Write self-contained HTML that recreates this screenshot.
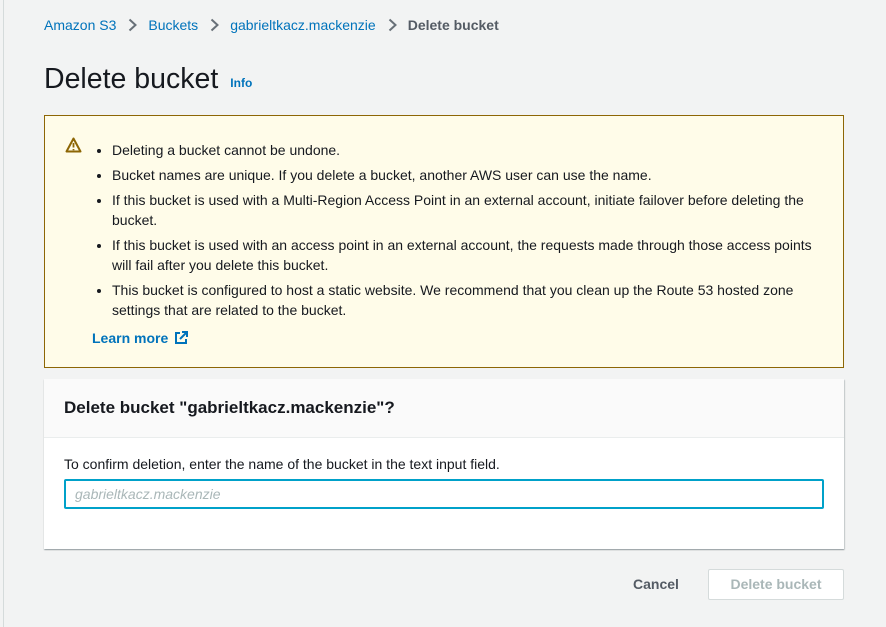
<!DOCTYPE html>
<html><head><style>
body{margin:0;width:886px;height:627px;background:#f2f3f3;font-family:"Liberation Sans",sans-serif;position:relative;overflow:hidden;color:#16191f}
.lb{position:absolute;left:3px;top:0;width:1px;height:627px;background:#d5dbdb}
.bc{position:absolute;left:44px;top:17px;font-size:14px;color:#0073bb;white-space:nowrap}
.bc svg{margin:0 11px 0 12px;vertical-align:-2px}
.bc b{color:#545b64}
h1{position:absolute;left:44px;top:63px;margin:0;font-size:28.5px;font-weight:normal;color:#16191f}
h1 small{font-size:12px;font-weight:bold;color:#0073bb;margin-left:12px;vertical-align:1px}
.warn{position:absolute;left:44px;top:115px;width:798px;height:251px;background:#fffce9;border:1px solid #8d6605;}
.warn ul{position:absolute;left:47px;top:24px;margin:0;padding:0 0 0 20px;width:720px;font-size:14px;line-height:20px}
.warn li{margin-bottom:5px}
.lm{position:absolute;left:47px;top:214px;font-size:14px;font-weight:bold;color:#0073bb}
.card{position:absolute;left:44px;top:379px;width:800px;height:170px;background:#fff;box-shadow:0 1px 1px rgba(0,28,36,.3),1px 1px 1px rgba(0,28,36,.15);}
.ch{height:58px;background:#fafafa;border-bottom:1px solid #eaeded;font-size:17px;font-weight:bold;line-height:58px;padding-left:20px}
.lab{position:absolute;left:20px;top:77px;font-size:14px}
.inp{position:absolute;left:20px;top:100px;height:26px;border:2px solid #00a1c9;border-radius:2px;font-size:14px;font-style:italic;color:#aab7b8;line-height:26px;padding-left:9px;width:747px}
.cancel{position:absolute;left:633px;top:576px;font-size:14px;font-weight:bold;color:#545b64}
.del{position:absolute;left:708px;top:569px;width:134px;height:29px;border:1px solid #d5dbdb;background:#fff;font-size:14px;font-weight:bold;color:#aab7b8;text-align:center;line-height:29px;border-radius:2px}
</style></head><body>
<div class="lb"></div>
<div class="bc">Amazon S3<svg width="9" height="14" viewBox="0 0 9 14"><path d="M1.5 1.5l6 5.5-6 5.5" fill="none" stroke="#687078" stroke-width="2"/></svg>Buckets<svg width="9" height="14" viewBox="0 0 9 14"><path d="M1.5 1.5l6 5.5-6 5.5" fill="none" stroke="#687078" stroke-width="2"/></svg>gabrieltkacz.mackenzie<svg width="9" height="14" viewBox="0 0 9 14"><path d="M1.5 1.5l6 5.5-6 5.5" fill="none" stroke="#687078" stroke-width="2"/></svg><b>Delete bucket</b></div>
<h1>Delete bucket<small>Info</small></h1>
<div class="warn">
<svg style="position:absolute;left:20px;top:21px" width="17" height="16" viewBox="0 0 17 16"><path d="M8.5 1.5L1.5 14.5h14z" fill="none" stroke="#8d6605" stroke-width="2" stroke-linejoin="round"/><path d="M8.5 6v4.5M8.5 12v1.3" stroke="#8d6605" stroke-width="1.8"/></svg>
<ul>
<li>Deleting a bucket cannot be undone.</li>
<li>Bucket names are unique. If you delete a bucket, another AWS user can use the name.</li>
<li>If this bucket is used with a Multi-Region Access Point in an external account, initiate failover before deleting the bucket.</li>
<li>If this bucket is used with an access point in an external account, the requests made through those access points will fail after you delete this bucket.</li>
<li>This bucket is configured to host a static website. We recommend that you clean up the Route 53 hosted zone settings that are related to the bucket.</li>
</ul>
<div class="lm">Learn more <svg width="14" height="14" viewBox="0 0 14 14" style="vertical-align:-2px;margin-left:2px"><path d="M6 2H2v10h10V8M8 1h5v5M13 1L6 8" fill="none" stroke="#0073bb" stroke-width="2"/></svg></div>
</div>
<div class="card">
<div class="ch">Delete bucket "gabrieltkacz.mackenzie"?</div>
<div class="lab">To confirm deletion, enter the name of the bucket in the text input field.</div>
<div class="inp">gabrieltkacz.mackenzie</div>
</div>
<div class="cancel">Cancel</div>
<div class="del">Delete bucket</div>
</body></html>
